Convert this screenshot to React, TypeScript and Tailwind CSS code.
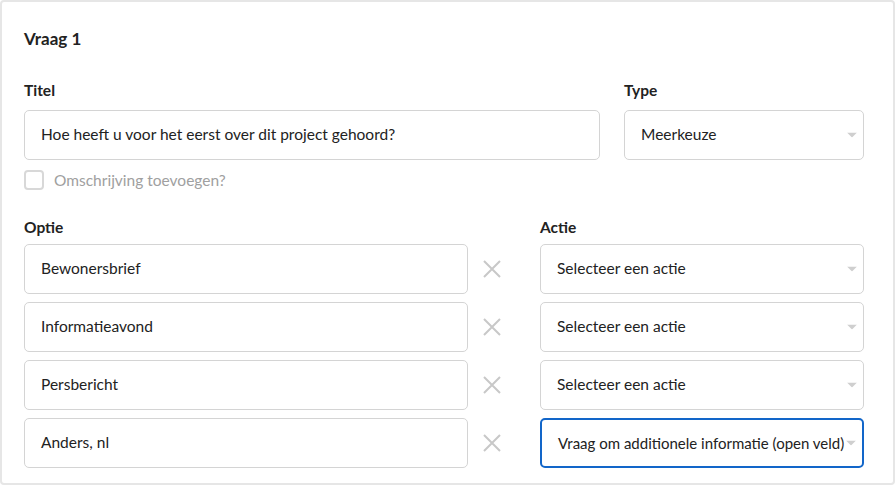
import React from 'react';

const font = { fontFamily: 'Lato, "Noto Sans", sans-serif' };

const Arrow = () => (
  <svg width="10" height="5" viewBox="0 0 10 5" className="absolute right-[6px] top-1/2 z-10 -translate-y-1/2">
    <path d="M0 0 L10 0 L5 5 Z" fill="#cfcfcf" />
  </svg>
);

const Cross = () => (
  <svg width="18" height="18" viewBox="0 0 18 18">
    <path d="M1 1 L17 17 M17 1 L1 17" stroke="#c8c8c8" strokeWidth="2" />
  </svg>
);

const Select: React.FC<{ value: string; active?: boolean; className?: string }> = ({ value, active, className }) => (
  <div
    className={`relative flex h-[50px] items-center rounded-[5px] bg-white pl-[16px] text-[#222] ${active ? 'border-2 border-[#1266c9] pl-[15px] text-[15px]' : 'border border-[#d4d4d4] text-[15.5px]'} ${className ?? ''}`}
  >
    <span className="whitespace-nowrap">{value}</span>
    <Arrow />
  </div>
);

const Input: React.FC<{ value: string; className?: string }> = ({ value, className }) => (
  <div className={`flex h-[50px] items-center rounded-[5px] border border-[#d4d4d4] bg-white pl-[16px] text-[15.5px] text-[#222] ${className ?? ''}`}>
    {value}
  </div>
);

const options = [
  { label: 'Bewonersbrief', action: 'Selecteer een actie' },
  { label: 'Informatieavond', action: 'Selecteer een actie' },
  { label: 'Persbericht', action: 'Selecteer een actie' },
  { label: 'Anders, nl', action: 'Vraag om additionele informatie (open veld)', active: true },
];

export default function App() {
  return (
    <div className="h-[486px] w-[896px] bg-white" style={font}>
      <div className="h-[485px] w-[895px] rounded-[4px] border-2 border-[#e6e6e6] px-[22px] pt-[25px]">
        <h2 className="text-[17px] font-bold leading-[24px] text-[#222]">Vraag 1</h2>

        <div className="mt-[29px] flex gap-[24px]">
          <div className="w-[576px]">
            <div className="mb-[10px] text-[15.5px] font-bold leading-[20px] text-[#222]">Titel</div>
            <Input value="Hoe heeft u voor het eerst over dit project gehoord?" />
          </div>
          <div className="w-[240px]">
            <div className="mb-[10px] text-[15.5px] font-bold leading-[20px] text-[#222]">Type</div>
            <Select value="Meerkeuze" />
          </div>
        </div>

        <label className="mt-[10px] flex items-center gap-[10px] leading-[20px]">
          <span className="h-[20px] w-[20px] rounded-[4px] border-2 border-[#d8d8d8] bg-white" />
          <span className="text-[15.5px] text-[#a0a0a0]">Omschrijving toevoegen?</span>
        </label>

        <div className="mt-[27px] flex">
          <div className="w-[516px] text-[15.5px] font-bold leading-[20px] text-[#222]">Optie</div>
          <div className="text-[15.5px] font-bold leading-[20px] text-[#222]">Actie</div>
        </div>

        <div className="mt-[7px] flex flex-col gap-[8px]">
          {options.map(o => (
            <div key={o.label} className="flex items-center">
              <Input value={o.label} className="w-[444px]" />
              <div className="flex w-[48px] justify-center">
                <Cross />
              </div>
              <Select value={o.action} active={o.active} className="ml-[24px] w-[324px]" />
            </div>
          ))}
        </div>
      </div>
    </div>
  );
}
